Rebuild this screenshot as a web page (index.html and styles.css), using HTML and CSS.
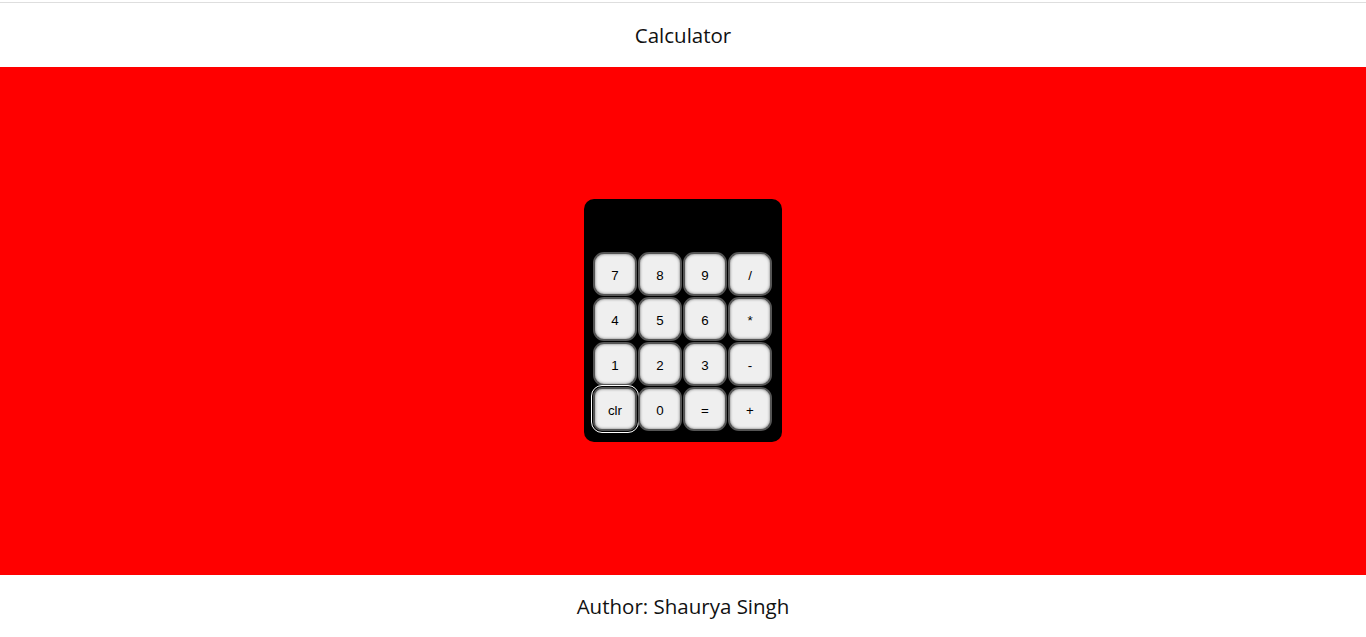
FILE: index.html
```html
<!DOCTYPE html>
<html>
<head>
<meta charset="utf-8">
<title>Calculator</title>
<link rel="stylesheet" href="styles.css">
</head>
<body>
<header class="top">Calculator</header>
<main class="stage">
  <div class="calc">
    <div class="display"></div>
    <div class="keys">
      <button class="key">7</button>
      <button class="key">8</button>
      <button class="key">9</button>
      <button class="key">/</button>
      <button class="key">4</button>
      <button class="key">5</button>
      <button class="key">6</button>
      <button class="key">*</button>
      <button class="key">1</button>
      <button class="key">2</button>
      <button class="key">3</button>
      <button class="key">-</button>
      <button class="key focused">clr</button>
      <button class="key">0</button>
      <button class="key">=</button>
      <button class="key">+</button>
    </div>
  </div>
</main>
<footer class="bottom">Author: Shaurya Singh</footer>
</body>
</html>
```

FILE: styles.css
```css
html, body {
  margin: 0;
  padding: 0;
  background: #fff;
}
body {
  font-family: "Open Sans", "Noto Sans", sans-serif;
  color: #111;
}
.top {
  margin-top: 2px;
  border-top: 1px solid #dedede;
  height: 65px;
  display: flex;
  align-items: center;
  justify-content: center;
  font-size: 20.5px;
  box-sizing: border-box;
}
.stage {
  height: 508px;
  background: #ff0000;
  display: flex;
  align-items: center;
  justify-content: center;
}
.calc {
  width: 198px;
  height: 243px;
  box-sizing: border-box;
  background: #000;
  border-radius: 10px;
  padding: 9px 10px 11px 9px;
  display: flex;
  flex-direction: column;
  margin-top: -2px;
}
.display {
  height: 45px;
}
.keys {
  display: grid;
  grid-template-columns: repeat(4, 44px);
  grid-auto-rows: 44px;
  gap: 1px;
}
.key {
  width: 44px;
  height: 44px;
  box-sizing: border-box;
  margin: 0;
  padding: 3px 0 0;
  background: #efefef;
  border: 2px solid #555;
  border-radius: 11px;
  box-shadow: inset 0 0 3px rgba(0,0,0,0.55);
  font-family: "Liberation Sans", Arial, sans-serif;
  font-size: 13.333px;
  color: #000;
}
.focused {
  outline: 1px solid #fff;
  outline-offset: 1px;
  border-radius: 9px;
}
.bottom {
  height: 62px;
  display: flex;
  align-items: center;
  justify-content: center;
  font-size: 20.5px;
  padding-top: 0;
  box-sizing: border-box;
}
```
